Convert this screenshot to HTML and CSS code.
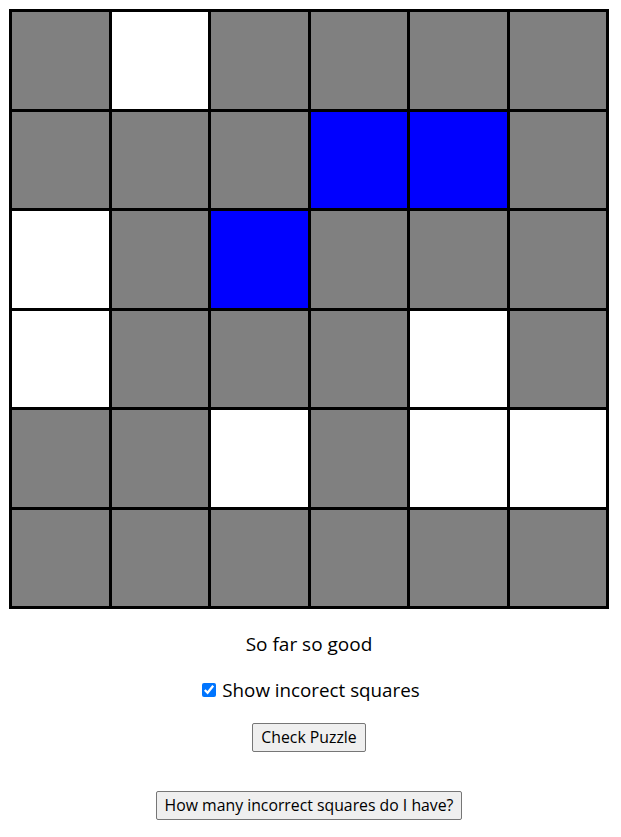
FILE: index.html
```
<!DOCTYPE html>
<html>
<head>
<meta charset="utf-8">
<link rel="stylesheet" href="styles.css">
</head>
<body>
<div class="page">
  <div class="board">
    <div class="cell g"></div><div class="cell w"></div><div class="cell g"></div><div class="cell g"></div><div class="cell g"></div><div class="cell g"></div>
    <div class="cell g"></div><div class="cell g"></div><div class="cell g"></div><div class="cell b"></div><div class="cell b"></div><div class="cell g"></div>
    <div class="cell w"></div><div class="cell g"></div><div class="cell b"></div><div class="cell g"></div><div class="cell g"></div><div class="cell g"></div>
    <div class="cell w"></div><div class="cell g"></div><div class="cell g"></div><div class="cell g"></div><div class="cell w"></div><div class="cell g"></div>
    <div class="cell g"></div><div class="cell g"></div><div class="cell w"></div><div class="cell g"></div><div class="cell w"></div><div class="cell w"></div>
    <div class="cell g"></div><div class="cell g"></div><div class="cell g"></div><div class="cell g"></div><div class="cell g"></div><div class="cell g"></div>
  </div>
  <p class="status">So far so good</p>
  <label class="toggle"><input type="checkbox" checked> Show incorect squares</label>
  <button class="btn check">Check Puzzle</button>
  <button class="btn count">How many incorrect squares do I have?</button>
</div>
</body>
</html>
```
FILE: styles.css
```
html, body {
  margin: 0;
  padding: 0;
  background: #fff;
}
body {
  font-family: "Open Sans", "Noto Sans", sans-serif;
  color: #000;
}
.page {
  width: 600px;
  margin: 9px 0 0 9px;
  display: flex;
  flex-direction: column;
  align-items: center;
}
.board {
  box-sizing: border-box;
  width: 600px;
  height: 600px;
  background: #000;
  padding: 3px;
  display: grid;
  grid-template-columns: repeat(6, 1fr);
  grid-template-rows: repeat(6, 1fr);
  gap: 3px;
}
.cell.g { background: #808080; }
.cell.w { background: #fff; }
.cell.b { background: #0000ff; }
.status {
  margin: 22px 0 0;
  font-size: 19px;
  line-height: 26px;
}
.toggle {
  margin-top: 20px;
  font-size: 18.8px;
  line-height: 26px;
  display: flex;
  align-items: center;
  gap: 6px;
}
.toggle input {
  margin: 0 0 0 4px;
  width: 14px;
  height: 14px;
  accent-color: #0075ff;
}
.btn {
  font-family: "Open Sans", "Noto Sans", sans-serif;
  font-size: 15.8px;
  line-height: 21px;
  padding: 3px 8px;
  background: #efefef;
  border: 1px solid #767676;
  border-radius: 2px;
  color: #000;
}
.check {
  margin-top: 20px;
}
.count {
  margin-top: 39px;
}
```
